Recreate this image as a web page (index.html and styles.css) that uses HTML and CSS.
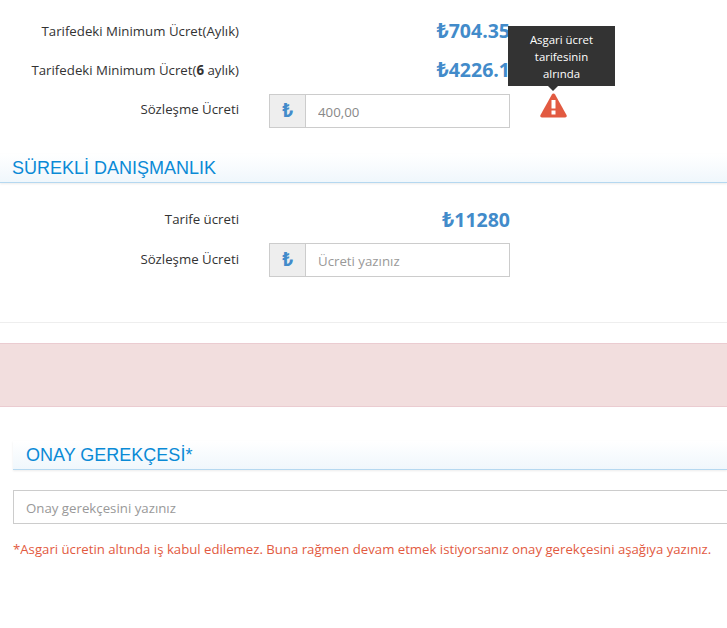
FILE: index.html
```html
<!DOCTYPE html>
<html lang="tr">
<head>
    <meta charset="UTF-8">
    <meta name="viewport" content="width=device-width, initial-scale=1.0">
    <title>Ücret</title>
    <link rel="stylesheet" href="styles.css">
</head>
<body>
    <div class="fee-block">
        <div class="form-row price-row">
            <span class="form-label">Tarifedeki Minimum Ücret(Aylık)</span>
            <span class="price"><span class="lira">₺</span>704.35</span>
        </div>
        <div class="form-row price-row">
            <span class="form-label">Tarifedeki Minimum Ücret(<b>6</b> aylık)</span>
            <span class="price"><span class="lira">₺</span>4226.1</span>
        </div>
        <div class="form-row input-row">
            <span class="form-label">Sözleşme Ücreti</span>
            <div class="input-group">
                <span class="addon">₺</span>
                <input class="field" type="text" value="400,00">
            </div>
            <div class="warn">
                <svg class="warn-icon" width="27" height="25" viewBox="0 0 27 25">
                    <path fill="#e25a41" d="M13.5 0.5c.7 0 1.2.4 1.600 1l11.400 20.600c.7 1.300-.1 2.400-1.400 2.400H1.900C.6 24.500-.2 23.400.5 22.100L11.900 1.500c.4-.6.9-1 1.600-1z"/>
                    <rect fill="#fff" x="11.500" y="7" width="4" height="8.500"/>
                    <rect fill="#fff" x="11.500" y="17.500" width="4" height="4"/>
                </svg>
                <div class="tooltip">Asgari ücret tarifesinin alrında</div>
            </div>
        </div>
    </div>

    <h3 class="section-title">SÜREKLİ DANIŞMANLIK</h3>

    <div class="fee-block second">
        <div class="form-row price-row">
            <span class="form-label">Tarife ücreti</span>
            <span class="price"><span class="lira">₺</span>11280</span>
        </div>
        <div class="form-row input-row">
            <span class="form-label">Sözleşme Ücreti</span>
            <div class="input-group">
                <span class="addon">₺</span>
                <input class="field" type="text" placeholder="Ücreti yazınız">
            </div>
        </div>
    </div>

    <hr class="divider">
    <div class="alert-box"></div>

    <div class="reason">
        <h3 class="section-title">ONAY GEREKÇESİ<span class="star">*</span></h3>
        <input class="field reason-input" type="text" placeholder="Onay gerekçesini yazınız">
    </div>
    <p class="note">*Asgari ücretin altında iş kabul edilemez. Buna rağmen devam etmek istiyorsanız onay gerekçesini aşağıya yazınız.</p>
</body>
</html>
```

FILE: styles.css
```css
* {
    margin: 0;
    padding: 0;
    box-sizing: border-box;
}

html, body {
    height: 628px;
    overflow: hidden;
}

body {
    background: #fff;
    color: #333;
    font-family: "Open Sans", "DejaVu Sans", sans-serif;
    font-size: 13.25px;
}

.fee-block {
    padding-top: 11px;
}

.fee-block.second {
    padding-top: 15px;
}

.form-row {
    display: grid;
    grid-template-columns: 239px 241px;
    column-gap: 30px;
}

.price-row {
    height: 39px;
    align-items: center;
}

.second .price-row {
    height: 42px;
    margin-bottom: 3px;
}

.input-row {
    height: 34px;
    margin-top: 5px;
    position: relative;
}

.second .input-row {
    margin-top: 0;
}

.form-label {
    text-align: right;
    white-space: nowrap;
}

.input-row .form-label {
    padding-top: 6px;
}

.second .input-row .form-label {
    padding-top: 7px;
}

.price {
    color: #428bca;
    font-size: 19.5px;
    font-weight: 700;
    text-align: right;
    white-space: nowrap;
}

.lira {
    font-family: "Noto Sans", sans-serif;
    font-size: 21px;
    line-height: 1;
}

.input-group {
    display: flex;
    height: 34px;
}

.addon {
    width: 36px;
    flex: none;
    background: #eee;
    border: 1px solid #ccc;
    border-right: 0;
    color: #428bca;
    font-family: "Inter", sans-serif;
    font-size: 19px;
    font-weight: 700;
    line-height: 32px;
    text-align: center;
}

.field {
    width: 100%;
    height: 34px;
    padding: 2px 12px 0;
    border: 1px solid #ccc;
    color: #888;
    font-family: "Open Sans", "DejaVu Sans", sans-serif;
    font-size: 13.25px;
    outline: none;
}

.field::placeholder {
    color: #999;
    opacity: 1;
}

.warn {
    position: absolute;
    left: 540px;
    top: -1px;
}

.tooltip {
    position: absolute;
    left: -32px;
    bottom: 32px;
    width: 107px;
    height: 60px;
    padding: 5px 8px 0;
    background: #333;
    color: #fff;
    font-size: 11.4px;
    line-height: 17px;
    text-align: center;
}

.tooltip::after {
    content: "";
    position: absolute;
    left: 40px;
    top: 60px;
    border: 5px solid transparent;
    border-bottom: 0;
    border-top-color: #333;
}

.warn-icon {
    display: block;
}

.section-title {
    height: 29px;
    margin-top: 26px;
    padding-left: 12px;
    background: linear-gradient(to bottom, #fff, #f0f7fc);
    border-bottom: 1px solid #b5d8f0;
    box-shadow: 0 1px 2px rgba(0, 0, 0, 0.08);
    color: #0a8ad6;
    font-family: "Liberation Sans", Arial, sans-serif;
    font-size: 18px;
    font-weight: 400;
    line-height: 28px;
}

.divider {
    margin-top: 45px;
    border: 0;
    border-top: 1px solid #eee;
}

.alert-box {
    height: 64px;
    margin-top: 20px;
    background: #f2dede;
    border-top: 1px solid #ebccd1;
    border-bottom: 1px solid #ebccd1;
}

.reason {
    margin-left: 13px;
    padding-top: 7px;
}

.reason .section-title {
    margin-top: 27px;
    padding-left: 13px;
}

.reason-input {
    display: block;
    margin-top: 20px;
    border-right: 0;
}

.note {
    margin: 16px 0 0 13px;
    color: #e25a41;
    font-size: 13.2px;
    white-space: nowrap;
}
```
